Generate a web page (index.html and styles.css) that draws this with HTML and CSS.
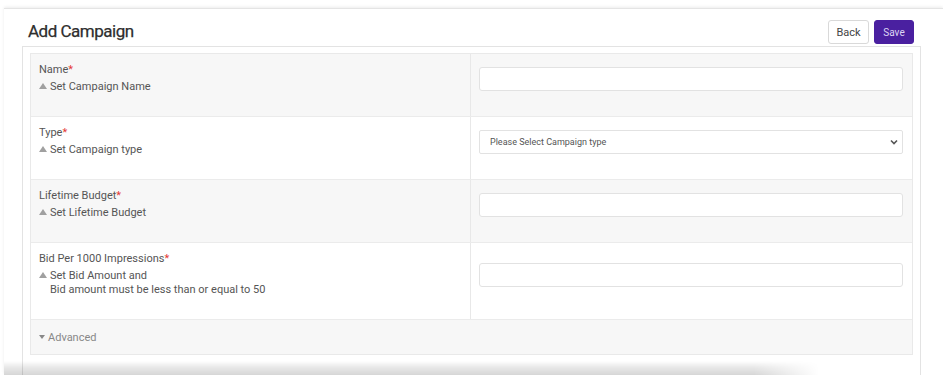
FILE: index.html
```html
<!DOCTYPE html>
<html>
<head>
<meta charset="utf-8">
<link rel="stylesheet" href="styles.css">
</head>
<body>
<div class="panel">
  <div class="header">
    <h1 class="title">Add Campaign</h1>
    <div class="actions">
      <button class="btn btn-back">Back</button>
      <button class="btn btn-save">Save</button>
    </div>
  </div>
  <div class="card">
    <div class="table">
      <div class="row grey">
        <div class="label-cell">
          <div class="label">Name<span class="req">*</span></div>
          <div class="hint"><span class="tri"></span><div>Set Campaign Name</div></div>
        </div>
        <div class="field-cell"><input class="input" type="text"></div>
      </div>
      <div class="row">
        <div class="label-cell">
          <div class="label">Type<span class="req">*</span></div>
          <div class="hint"><span class="tri"></span><div>Set Campaign type</div></div>
        </div>
        <div class="field-cell">
          <div class="select">
            <span>Please Select Campaign type</span>
            <svg width="8" height="6" viewBox="0 0 8 6"><path d="M1 1.5 L4 4.5 L7 1.5" fill="none" stroke="#555" stroke-width="1.6"/></svg>
          </div>
        </div>
      </div>
      <div class="row grey">
        <div class="label-cell">
          <div class="label">Lifetime Budget<span class="req">*</span></div>
          <div class="hint"><span class="tri"></span><div>Set Lifetime Budget</div></div>
        </div>
        <div class="field-cell"><input class="input" type="text"></div>
      </div>
      <div class="row">
        <div class="label-cell">
          <div class="label">Bid Per 1000 Impressions<span class="req">*</span></div>
          <div class="hint"><span class="tri"></span><div>Set Bid Amount and<br>Bid amount must be less than or equal to 50</div></div>
        </div>
        <div class="field-cell"><input class="input" type="text"></div>
      </div>
      <div class="advanced"><span class="tri-down"></span>Advanced</div>
    </div>
  </div>
</div>
<div class="bottom-shadow"></div>
</body>
</html>
```

FILE: styles.css
```css
* { box-sizing: border-box; }
html, body { margin: 0; padding: 0; background: #fff; overflow: hidden; }
body { font-family: Roboto, "Liberation Sans", sans-serif; width: 943px; height: 375px; position: relative; }

.panel {
  margin: 8px 0 0 4px;
  height: 367px;
  border-top: 1px solid #e4e4e4;
  box-shadow: 0 -1px 3px rgba(0,0,0,0.08);
  display: flex;
  flex-direction: column;
}

.header {
  display: flex;
  align-items: center;
  justify-content: space-between;
  padding: 9px 29px 0 24px;
  height: 37px;
  flex: none;
}
.title {
  margin: 0 0 2px 0;
  font-size: 17px;
  font-weight: 400;
  letter-spacing: -0.5px;
  color: #2e2e2e;
  line-height: 20px;
  -webkit-text-stroke: 0.25px #2e2e2e;
}
.actions { display: flex; gap: 5px; }
.btn {
  font-family: Roboto, "Liberation Sans", sans-serif;
  height: 24px;
  border-radius: 3px;
  padding: 0;
  cursor: pointer;
}
.btn-back {
  width: 41px;
  background: #fff;
  border: 1px solid #d9d9d9;
  color: #444;
  font-size: 11px;
}
.btn-save {
  width: 40px;
  background: #4a20a0;
  border: 1px solid #4a20a0;
  color: #ddd5f4;
  font-size: 10px;
}

.card {
  margin: 0 22px 0 18px;
  border: 1px solid #e3e3e3;
  border-bottom: none;
  padding: 6px 7px 0 7px;
  flex: 1;
}

.table {
  border: 1px solid #e9e9e9;
}
.row {
  display: grid;
  grid-template-columns: 440px 1fr;
  border-bottom: 1px solid #ebebeb;
  background: #fff;
}
.row.grey { background: #f7f7f7; }

.label-cell {
  padding: 9px 8px 22px 8px;
  border-right: 1px solid #e8e8e8;
  font-size: 11px;
  color: #555;
}
.label { line-height: 14px; margin-bottom: 3px; color: #555; }
.req { color: #e53935; }
.hint { display: flex; align-items: flex-start; line-height: 14px; }
.tri {
  width: 0; height: 0;
  border-left: 4px solid transparent;
  border-right: 4px solid transparent;
  border-bottom: 6px solid #a0a0a0;
  margin: 3px 3px 0 0;
  flex: none;
}

.field-cell {
  display: flex;
  align-items: center;
  padding: 0 9px 0 8px;
}
.input {
  display: block;
  width: 100%;
  height: 24px;
  margin: 0 0 12px 0;
  border: 1px solid #e2e2e2;
  border-radius: 3px;
  background: #fff;
  outline: none;
}
.select {
  width: 100%;
  height: 24px;
  margin: 0 0 12px 0;
  border: 1px solid #e2e2e2;
  border-radius: 2px;
  background: #fff;
  display: flex;
  align-items: center;
  justify-content: space-between;
  padding: 0 4px 0 10px;
  font-size: 9px;
  color: #555;
}

.advanced {
  height: 34px;
  background: #f7f7f7;
  display: flex;
  align-items: center;
  padding-left: 8px;
  font-size: 11px;
  color: #888;
}
.tri-down {
  width: 0; height: 0;
  border-left: 3.5px solid transparent;
  border-right: 3.5px solid transparent;
  border-top: 4px solid #888;
  margin-right: 3px;
}

.bottom-shadow {
  position: absolute;
  left: 4px;
  bottom: 0;
  width: 815px;
  height: 14px;
  background: linear-gradient(to bottom, rgba(0,0,0,0), rgba(0,0,0,0.09) 45%, rgba(0,0,0,0.16));
  -webkit-mask-image: linear-gradient(to right, #000 0, #000 92%, transparent 100%);
  mask-image: linear-gradient(to right, #000 0, #000 92%, transparent 100%);
}
```
